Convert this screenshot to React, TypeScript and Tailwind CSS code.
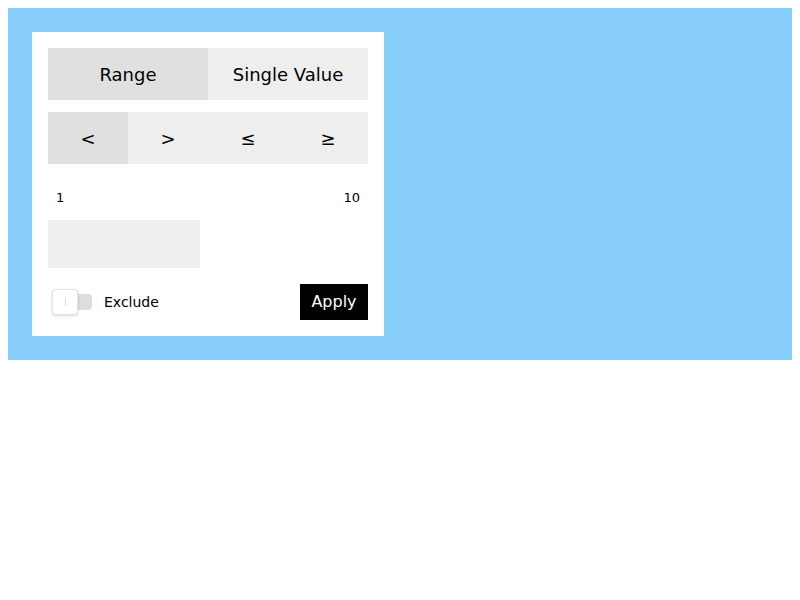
import React from "react";

export default function App() {
  const font = { fontFamily: '"DejaVu Sans", sans-serif' };
  return (
    <div className="p-2" style={font}>
      <div className="bg-[#87cefa] p-6">
        <div className="bg-white w-[352px] p-4 flex flex-col">
          <div className="flex h-[52px] text-[18px] text-black">
            <div className="flex-1 bg-[#e0e0e0] flex items-center justify-center">Range</div>
            <div className="flex-1 bg-[#eeeeee] flex items-center justify-center">Single Value</div>
          </div>
          <div className="flex h-[52px] mt-3 text-[18px] text-black">
            <div className="flex-1 bg-[#e0e0e0] flex items-center justify-center">&lt;</div>
            <div className="flex-1 bg-[#eeeeee] flex items-center justify-center">&gt;</div>
            <div className="flex-1 bg-[#eeeeee] flex items-center justify-center">≤</div>
            <div className="flex-1 bg-[#eeeeee] flex items-center justify-center">≥</div>
          </div>
          <div className="flex justify-between px-2 mt-6 h-5 items-center text-[13px] text-black">
            <span>1</span>
            <span>10</span>
          </div>
          <div className="mt-3 w-[152px] h-12 bg-[#eeeeee]" />
          <div className="mt-4 flex items-center justify-between h-9">
            <div className="flex items-center">
              <div className="relative w-10 h-[26px] ml-1 flex items-center">
                <div className="w-10 h-4 rounded-[4px] bg-[#dddddd]" />
                <div className="absolute left-0 top-0 w-[26px] h-[26px] bg-white rounded-[4px] border border-[#e2e2e2] shadow-[0_1px_3px_rgba(0,0,0,0.15)] flex items-center justify-center">
                  <div className="w-px h-2 bg-[#dddddd]" />
                </div>
              </div>
              <span className="ml-3 text-[14px] text-black">Exclude</span>
            </div>
            <button className="h-9 w-[68px] bg-black text-white text-[16px]" style={font}>Apply</button>
          </div>
        </div>
      </div>
    </div>
  );
}
